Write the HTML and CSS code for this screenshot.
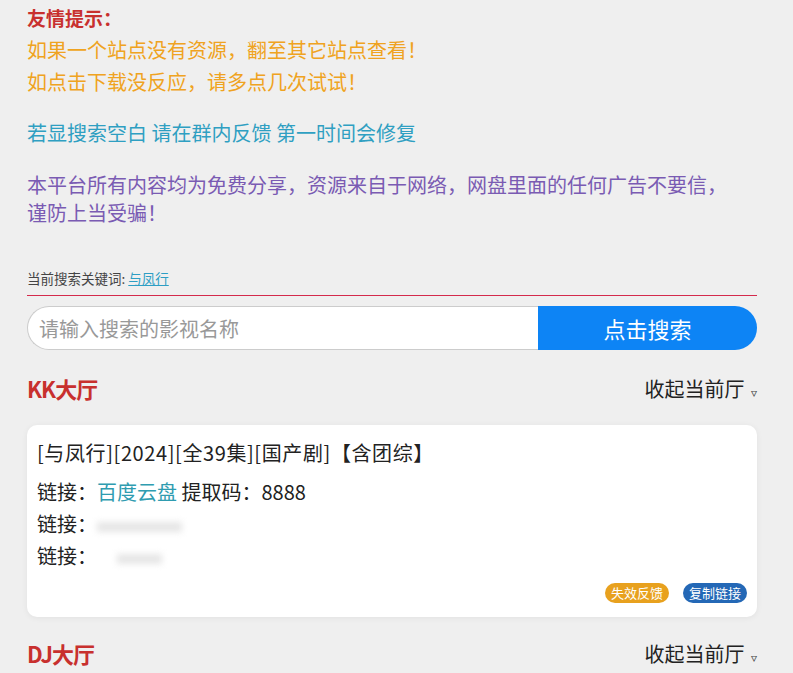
FILE: index.html
```html
<!doctype html>
<html lang="zh-CN">
<head>
<meta charset="utf-8">
<title>影视搜索</title>
<meta name="viewport" content="width=device-width, initial-scale=1">
<link rel="stylesheet" href="styles.css">
</head>
<body>

<main>
  <div class="tips">
    <h3>友情提示：</h3>
    <p class="warn">如果一个站点没有资源，翻至其它站点查看！</p>
    <p class="warn">如点击下载没反应，请多点几次试试！</p>
  </div>

  <p class="notice">若显搜索空白 请在群内反馈 第一时间会修复</p>
  <p class="disclaimer">本平台所有内容均为免费分享，资源来自于网络，网盘里面的任何广告不要信，谨防上当受骗！</p>

  <div class="keyword">当前搜索关键词: <a href="#">与凤行</a></div>

  <form class="search" onsubmit="return false">
    <input type="text" placeholder="请输入搜索的影视名称">
    <button type="submit">点击搜索</button>
  </form>

  <section class="hall">
    <div class="hall-head">
      <h2>KK大厅</h2>
      <span class="fold">收起当前厅 <i>▿</i></span>
    </div>
    <div class="card">
      <div class="card-title">[与凤行][2024][全39集][国产剧]【含团综】</div>
      <div class="row">链接：<a href="#">百度云盘</a> 提取码：8888</div>
      <div class="row">链接：<span class="blur b1"></span></div>
      <div class="row">链接：<span class="blur b2"></span></div>
      <div class="actions">
        <span class="tag orange">失效反馈</span>
        <span class="tag blue">复制链接</span>
      </div>
    </div>
  </section>

  <section class="hall">
    <div class="hall-head">
      <h2>DJ大厅</h2>
      <span class="fold">收起当前厅 <i>▿</i></span>
    </div>
  </section>
</main>

</body>
</html>
```

FILE: styles.css
```css
:root{--red:#c8302e;--blue:#0d84f5;--bg:#efefef;}
body{margin:0;background:var(--bg);font-family:"Noto Sans CJK SC","Microsoft YaHei",sans-serif;color:#222;}
main{padding:2px 36px 40px 27px;}
p{margin:0;}

/* tips */
.tips h3{margin:0;font-size:19px;line-height:32px;color:var(--red);font-weight:700;}
.warn{font-size:20px;line-height:32px;color:#efa321;}
.notice{margin-top:19px;font-size:20px;line-height:32px;color:#2f9fc2;}
.disclaimer{max-width:708px;margin-top:22px;font-size:20px;line-height:28px;color:#7a5bb3;}

.keyword{margin-top:41px;padding-bottom:7px;font-size:13.5px;line-height:20px;color:#444;border-bottom:1px solid #d42a4c;}
.keyword a{color:#2d9ec4;}

/* search bar */
.search{display:flex;height:44px;margin-top:10px;}
.search input{flex:1;min-width:0;margin:0;padding:0 0 0 11px;border:1px solid #ccc;border-right:0;border-radius:22px 0 0 22px;background:#fff;font:20px "Noto Sans CJK SC",sans-serif;color:#333;outline:none;}
.search input::placeholder{color:#999;}
.search button{width:219px;margin:0;border:0;border-radius:0 22px 22px 0;background:var(--blue);color:#fff;font:22px "Noto Sans CJK SC",sans-serif;cursor:pointer;}

/* halls */
.hall-head{display:flex;justify-content:space-between;align-items:center;height:36px;margin-top:20px;}
.hall + .hall .hall-head{margin-top:18px;}
.hall-head h2{margin:0;font-size:22px;color:var(--red);font-weight:700;letter-spacing:-1px;}
.fold{font-size:20px;color:#222;}
.fold i{font-style:normal;font-size:12px;color:#444;margin-left:2px;}

.card{margin-top:19px;padding:14px 10px 14px 10px;background:#fff;border-radius:10px;box-shadow:0 1px 6px rgba(0,0,0,.06);}
.card-title{font-size:20px;line-height:28px;letter-spacing:.6px;}
.row{font-size:20px;line-height:32px;}
.card-title + .row{margin-top:9px;}
.row a{color:#2f9cb0;text-decoration:none;}
.blur{display:inline-block;vertical-align:middle;height:10px;background:#e6e6e6;filter:blur(3px);}
.blur.b1{width:85px;}
.blur.b2{width:45px;margin-left:20px;}

.actions{display:flex;justify-content:flex-end;gap:14px;margin-top:11px;}
.tag{padding:0 6px;height:20px;line-height:20px;border-radius:10px;font-size:13px;color:#fff;}
.tag.orange{background:#e8a11e;}
.tag.blue{background:#2468b6;}
```
